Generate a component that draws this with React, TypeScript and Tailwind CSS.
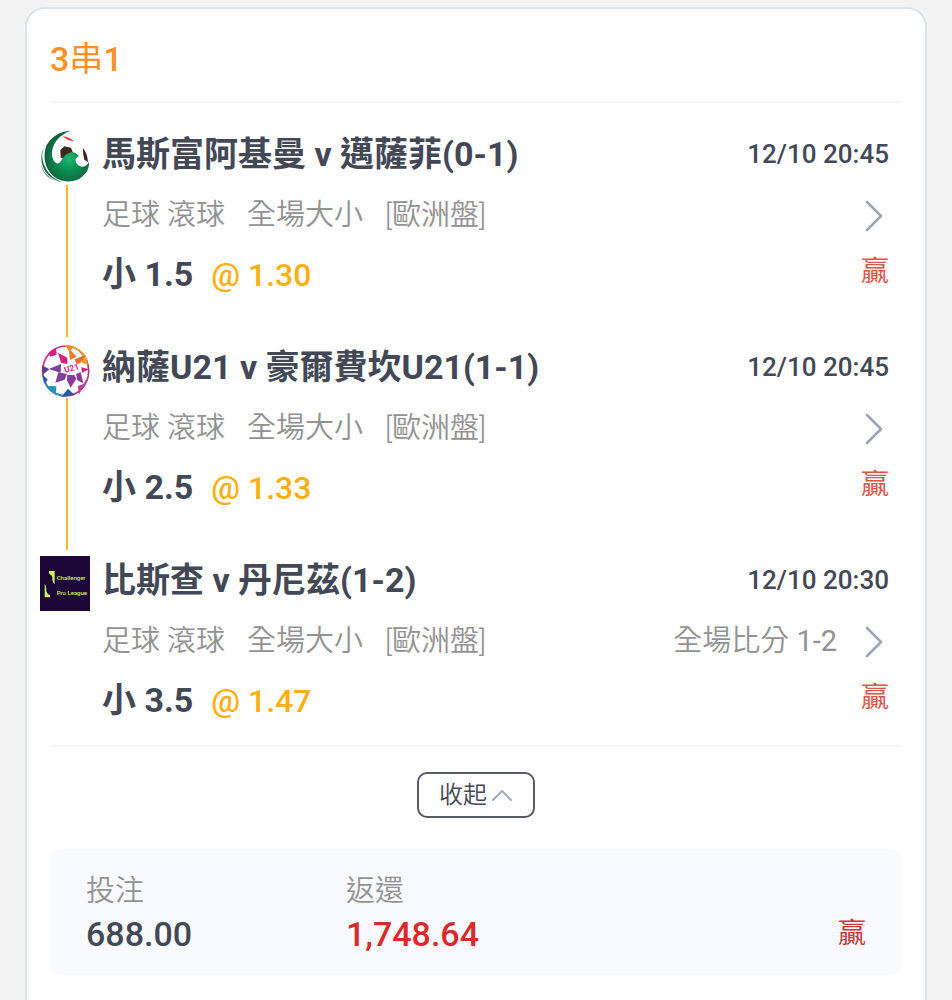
import type { ReactNode } from "react"

interface Leg {
  id: number;
  logo: ReactNode;
  match: string;
  time: string;
  pick: string;
  odds: string;
  fullScore?: string;
}

function EagleLogo() {
  return (
    <svg viewBox="30 27 150 165" className="h-[55px] w-[50px] shrink-0" aria-hidden="true">
      <defs>
        <radialGradient id="eagle" cx="0.55" cy="0.55" r="0.55">
          <stop offset="0" stopColor="#1fb872" />
          <stop offset="0.45" stopColor="#0b8f50" />
          <stop offset="1" stopColor="#10603e" />
        </radialGradient>
      </defs>
      <path d="M48 76 Q54 63 74 57 L64 76 L54 98 L48 90 Z" fill="#dc4a45" />
      <path d="M98 46 Q118 47 132 61 Q112 60 98 46 Z" fill="#e0403f" />
      <path d="M91 87 L103 76 L123 80 L130 98 L112 114 L92 110 Z" fill="#41281f" />
      <path d="M159 81 Q173 98 174 124 L163 116 Q158 97 159 81 Z" fill="#41281f" />
      <path
        d="M122 29 C88 31 56 50 46 84 C38 118 50 152 78 172 C98 184 128 184 148 173 C166 162 179 144 177 122
           C170 138 154 141 144 132 C135 124 133 112 146 106 C141 95 128 91 119 95 C107 98 99 108 93 120
           C84 134 70 128 66 103 C64 70 86 42 122 29 Z"
        fill="url(#eagle)"
      />
      <path d="M50 70 C36 84 33 106 41 128 C51 155 70 174 98 184 C68 178 44 158 37 131 C30 106 36 84 50 70 Z" fill="#176b47" />
      <path d="M33 126 C37 151 54 171 78 179 C54 174 35 154 33 126 Z" fill="#176b47" />
    </svg>
  )
}

function U21Logo() {
  return (
    <svg viewBox="30 21 150 165" className="h-[55px] w-[50px] shrink-0" aria-hidden="true">
      <defs>
        <linearGradient id="ring" x1="0" y1="0" x2="1" y2="1">
          <stop offset="0" stopColor="#d52382" />
          <stop offset="0.35" stopColor="#d33a7c" />
          <stop offset="0.6" stopColor="#7b3f9c" />
          <stop offset="1" stopColor="#c03a98" />
        </linearGradient>
      </defs>
      <ellipse cx="107" cy="105" rx="69" ry="75" fill="#fff" stroke="url(#ring)" strokeWidth="5" />
      <path d="M107 30 Q152 31 170 72" fill="none" stroke="#f0a32c" strokeWidth="5" />
      <path d="M40 125 Q52 177 107 180" fill="none" stroke="#1f9dc0" strokeWidth="5" />
      {/* Outer points */}
      <path d="M56 50 L78 36 L80 56 L60 62 Z" fill="#d5207f" />
      <path d="M106 29 L132 31 L119 48 Z" fill="#ef8a2a" />
      <path d="M158 48 L177 88 L155 80 Z" fill="#f0a32c" />
      <path d="M154 94 L177 100 L156 110 Z" fill="#d5207f" />
      <path d="M174 122 L148 174 L143 150 L159 145 Z" fill="#c03a98" />
      <path d="M114 158 L134 177 L94 182 Z" fill="#2a58a5" />
      <path d="M52 150 L79 151 L78 175 Z" fill="#2196b6" />
      <path d="M37 116 L53 130 L45 145 Z" fill="#2a58a5" />
      <path d="M36 88 L58 100 L38 116 Z" fill="#5e3b93" />
      {/* Inner points */}
      <path d="M84 50 L112 65 L112 84 L93 80 Z" fill="#d5207f" />
      <path d="M116 36 L140 62 L120 72 Z" fill="#ee7a2b" />
      <path d="M168 56 L134 70 L140 84 L150 82 Z" fill="#ee6a35" />
      <path d="M56 99 L93 84 L92 110 Z" fill="#7d3f9c" />
      <path d="M76 140 L85 109 L111 114 L104 131 Z" fill="#7d3f9c" />
      <path d="M112 117 L133 117 L139 128 L122 155 L111 133 Z" fill="#8c3b9c" />
      <path d="M138 114 L152 108 L160 142 L142 133 Z" fill="#8c3b9c" />
      <text x="105" y="111" transform="rotate(-15 105 111)" fontSize="25" fontWeight="700" fill="#d5207f">
        U21
      </text>
    </svg>
  )
}

function ChallengerLogo() {
  return (
    <svg viewBox="32 24 150 165" className="h-[55px] w-[50px] shrink-0 bg-[#1d0638]" aria-hidden="true">
      <path d="M59 69 H76 V109 Q68 103 69 88 Q68 80 59 77 Z" fill="#d3ef5c" />
      <path d="M46 108 Q51 113 51 128 Q53 139 62 141 V148 H46 Z" fill="#d3ef5c" />
      <text x="82" y="97" fontSize="18" fontWeight="500" fill="#d3ef5c">Challenger</text>
      <text x="82" y="140" fontSize="18" fontWeight="500" fill="#d3ef5c">Pro League</text>
    </svg>
  )
}

const legs: Leg[] = [
  {
    id: 1,
    logo: <EagleLogo />,
    match: "馬斯富阿基曼 v 邁薩菲(0-1)",
    time: "12/10 20:45",
    pick: "小 1.5",
    odds: "1.30",
  },
  {
    id: 2,
    logo: <U21Logo />,
    match: "納薩U21 v 豪爾費坎U21(1-1)",
    time: "12/10 20:45",
    pick: "小 2.5",
    odds: "1.33",
  },
  {
    id: 3,
    logo: <ChallengerLogo />,
    match: "比斯查 v 丹尼茲(1-2)",
    time: "12/10 20:30",
    pick: "小 3.5",
    odds: "1.47",
    fullScore: "1-2",
  },
]

function LegRow({ leg, isLast }: { leg: Leg; isLast: boolean }) {
  return (
    <li className="flex gap-3">
      {/* Logo and the line down to the next leg */}
      <div className="flex w-[50px] shrink-0 flex-col items-center pt-[6px]">
        {leg.logo}
        {!isLast && <div className="ml-1 w-[2px] flex-1 bg-[#f5b52a]" />}
      </div>

      <div className={`min-w-0 flex-1 pr-[23px] ${isLast ? "" : "pb-[33px]"}`}>
        <div className="flex h-[60px] items-center justify-between">
          <h2 className="text-[34px] leading-[60px] font-bold whitespace-nowrap text-[#434857]">{leg.match}</h2>
          <time className="text-[26px] font-medium whitespace-nowrap text-[#434857]">{leg.time}</time>
        </div>
        <div className="flex h-[60px] items-center justify-between pt-1 text-[29px] font-[350] text-[#929292]">
          <div className="flex items-center gap-[22px] whitespace-nowrap">
            <span>足球 滾球</span>
            <span>全場大小</span>
            <span>[歐洲盤]</span>
          </div>
          <div className="flex items-center gap-7">
            {leg.fullScore && (
              <span className="whitespace-nowrap">
                全場比分 <span className="font-normal">{leg.fullScore}</span>
              </span>
            )}
            <button type="button" aria-label="詳情" className="pr-[6px]">
              <svg viewBox="0 0 18 32" className="h-8 w-[18px]" fill="none" stroke="#9aa5b3" strokeWidth="2.5">
                <path d="M2 2 L16 16 L2 30" strokeLinecap="round" strokeLinejoin="round" />
              </svg>
            </button>
          </div>
        </div>
        <div className="flex h-[60px] items-center justify-between">
          <p className="flex items-baseline gap-[18px] whitespace-nowrap">
            <span className="text-[34px] font-bold text-[#434857]">{leg.pick}</span>
            <span className="text-[32px] font-medium text-[#fbb012]">@ {leg.odds}</span>
          </p>
          <span className="pb-1 text-[28px] text-[#dc554b]">贏</span>
        </div>
      </div>
    </li>
  )
}

export default function App() {
  return (
    <main className="min-h-screen bg-[#f3f3f3] px-[25px] pt-[7px] font-[Roboto,'Noto_Sans_CJK_TC',sans-serif]">
      <article className="min-h-[calc(100vh-7px)] rounded-t-[20px] border-2 border-b-0 border-[#dbe4ea] bg-[#fefefe] px-[13px] pb-6">
        <header className="mx-[10px] border-b-2 border-[#f5f5f5] pt-5 pb-3">
          <h1 className="text-[34px] leading-[60px] font-medium text-[#fb9128]">
            3<span className="font-normal">串</span>1
          </h1>
        </header>

        <ul className="pt-[21px]">
          {legs.map((leg, i) => (
            <LegRow key={leg.id} leg={leg} isLast={i === legs.length - 1} />
          ))}
        </ul>

        <div className="mx-[10px] mt-[15px] flex justify-center border-t-2 border-[#f5f5f5] pt-[25px]">
          <button
            type="button"
            className="flex h-[46px] items-center gap-1 rounded-[10px] border-2 border-[#565b66] px-5 text-[24px] font-[350] text-[#434857]"
          >
            收起
            <svg viewBox="0 0 22 14" className="h-[14px] w-[22px]" fill="none" stroke="#a3abb5" strokeWidth="2">
              <path d="M2 12 L11 3 L20 12" strokeLinecap="round" strokeLinejoin="round" />
            </svg>
          </button>
        </div>

        {/* Totals */}
        <footer className="mx-[10px] mt-[31px] flex items-end rounded-xl bg-[#f9faff] px-9 py-5">
          <div className="w-[260px]">
            <div className="text-[29px] leading-[44px] font-[350] text-[#929292]">投注</div>
            <div className="text-[34px] leading-[42px] font-medium text-[#434857]">688.00</div>
          </div>
          <div className="flex-1">
            <div className="text-[29px] leading-[44px] font-[350] text-[#929292]">返還</div>
            <div className="text-[34px] leading-[42px] font-medium text-[#d92a2a]">1,748.64</div>
          </div>
          <span className="text-[28px] leading-[42px] text-[#cb3434]">贏</span>
        </footer>
      </article>
    </main>
  )
}
